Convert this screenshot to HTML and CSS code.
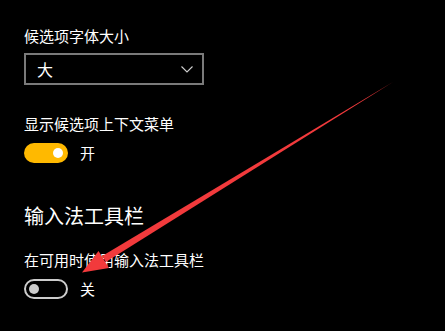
FILE: index.html
```html
<!DOCTYPE html>
<html lang="zh">
<head>
<meta charset="utf-8">
<link rel="stylesheet" href="styles.css">
</head>
<body>
<div class="page">
  <div class="label first">候选项字体大小</div>
  <div class="select">
    <span class="select-value">大</span>
    <svg class="chevron" width="12" height="7" viewBox="0 0 12 7"><path d="M0.5 0.5 L6 6 L11.5 0.5" fill="none" stroke="#d0d0d0" stroke-width="1.1"/></svg>
  </div>
  <div class="label second">显示候选项上下文菜单</div>
  <div class="toggle-row">
    <span class="toggle on"><span class="knob"></span></span>
    <span class="toggle-text">开</span>
  </div>
  <div class="heading">输入法工具栏</div>
  <div class="label fourth">在可用时使用输入法工具栏</div>
  <div class="toggle-row">
    <span class="toggle off"><span class="knob"></span></span>
    <span class="toggle-text">关</span>
  </div>
</div>
<svg class="arrow" width="445" height="331" viewBox="0 0 445 331">
  <polygon points="393,82 105.8,262 102.2,256" fill="#f23a3c"/>
  <polygon points="82,272.5 109,268 98.5,251" fill="#f23a3c"/>
</svg>
</body>
</html>
```
FILE: styles.css
```css
html, body {
  margin: 0;
  padding: 0;
  background: #000;
}
body {
  width: 445px;
  height: 331px;
  overflow: hidden;
  position: relative;
  font-family: "Noto Sans CJK SC", "Noto Sans", sans-serif;
  color: #fff;
}
.page {
  display: flex;
  flex-direction: column;
  align-items: flex-start;
  padding: 26px 0 0 24px;
}
.label {
  font-size: 15px;
  line-height: 20px;
  height: 20px;
}
.select {
  margin-top: 7px;
  box-sizing: border-box;
  width: 180px;
  height: 32px;
  border: 2px solid #7a7a7a;
  display: flex;
  align-items: center;
  justify-content: space-between;
  padding: 0 9px 0 11px;
}
.select-value {
  font-size: 16px;
  line-height: 20px;
}
.chevron {
  display: block;
  margin-top: 1px;
}
.label.second {
  margin-top: 29px;
}
.toggle-row {
  margin-top: 9px;
  display: flex;
  align-items: center;
  height: 20px;
}
.toggle {
  box-sizing: border-box;
  width: 44px;
  height: 20px;
  border-radius: 10px;
  display: flex;
  align-items: center;
}
.toggle.on {
  background: #ffb900;
  justify-content: flex-end;
  padding-right: 5px;
}
.toggle.off {
  border: 2px solid #cccccc;
  justify-content: flex-start;
  padding-left: 3px;
}
.knob {
  width: 10px;
  height: 10px;
  border-radius: 50%;
  background: #fff;
}
.toggle.off .knob {
  background: #cccccc;
}
.toggle-text {
  margin-left: 12px;
  font-size: 15px;
  line-height: 20px;
}
.heading {
  margin-top: 39px;
  font-size: 20px;
  line-height: 28px;
  height: 28px;
}
.label.fourth {
  margin-top: 20px;
}
.arrow {
  position: absolute;
  left: 0;
  top: 0;
}
```
